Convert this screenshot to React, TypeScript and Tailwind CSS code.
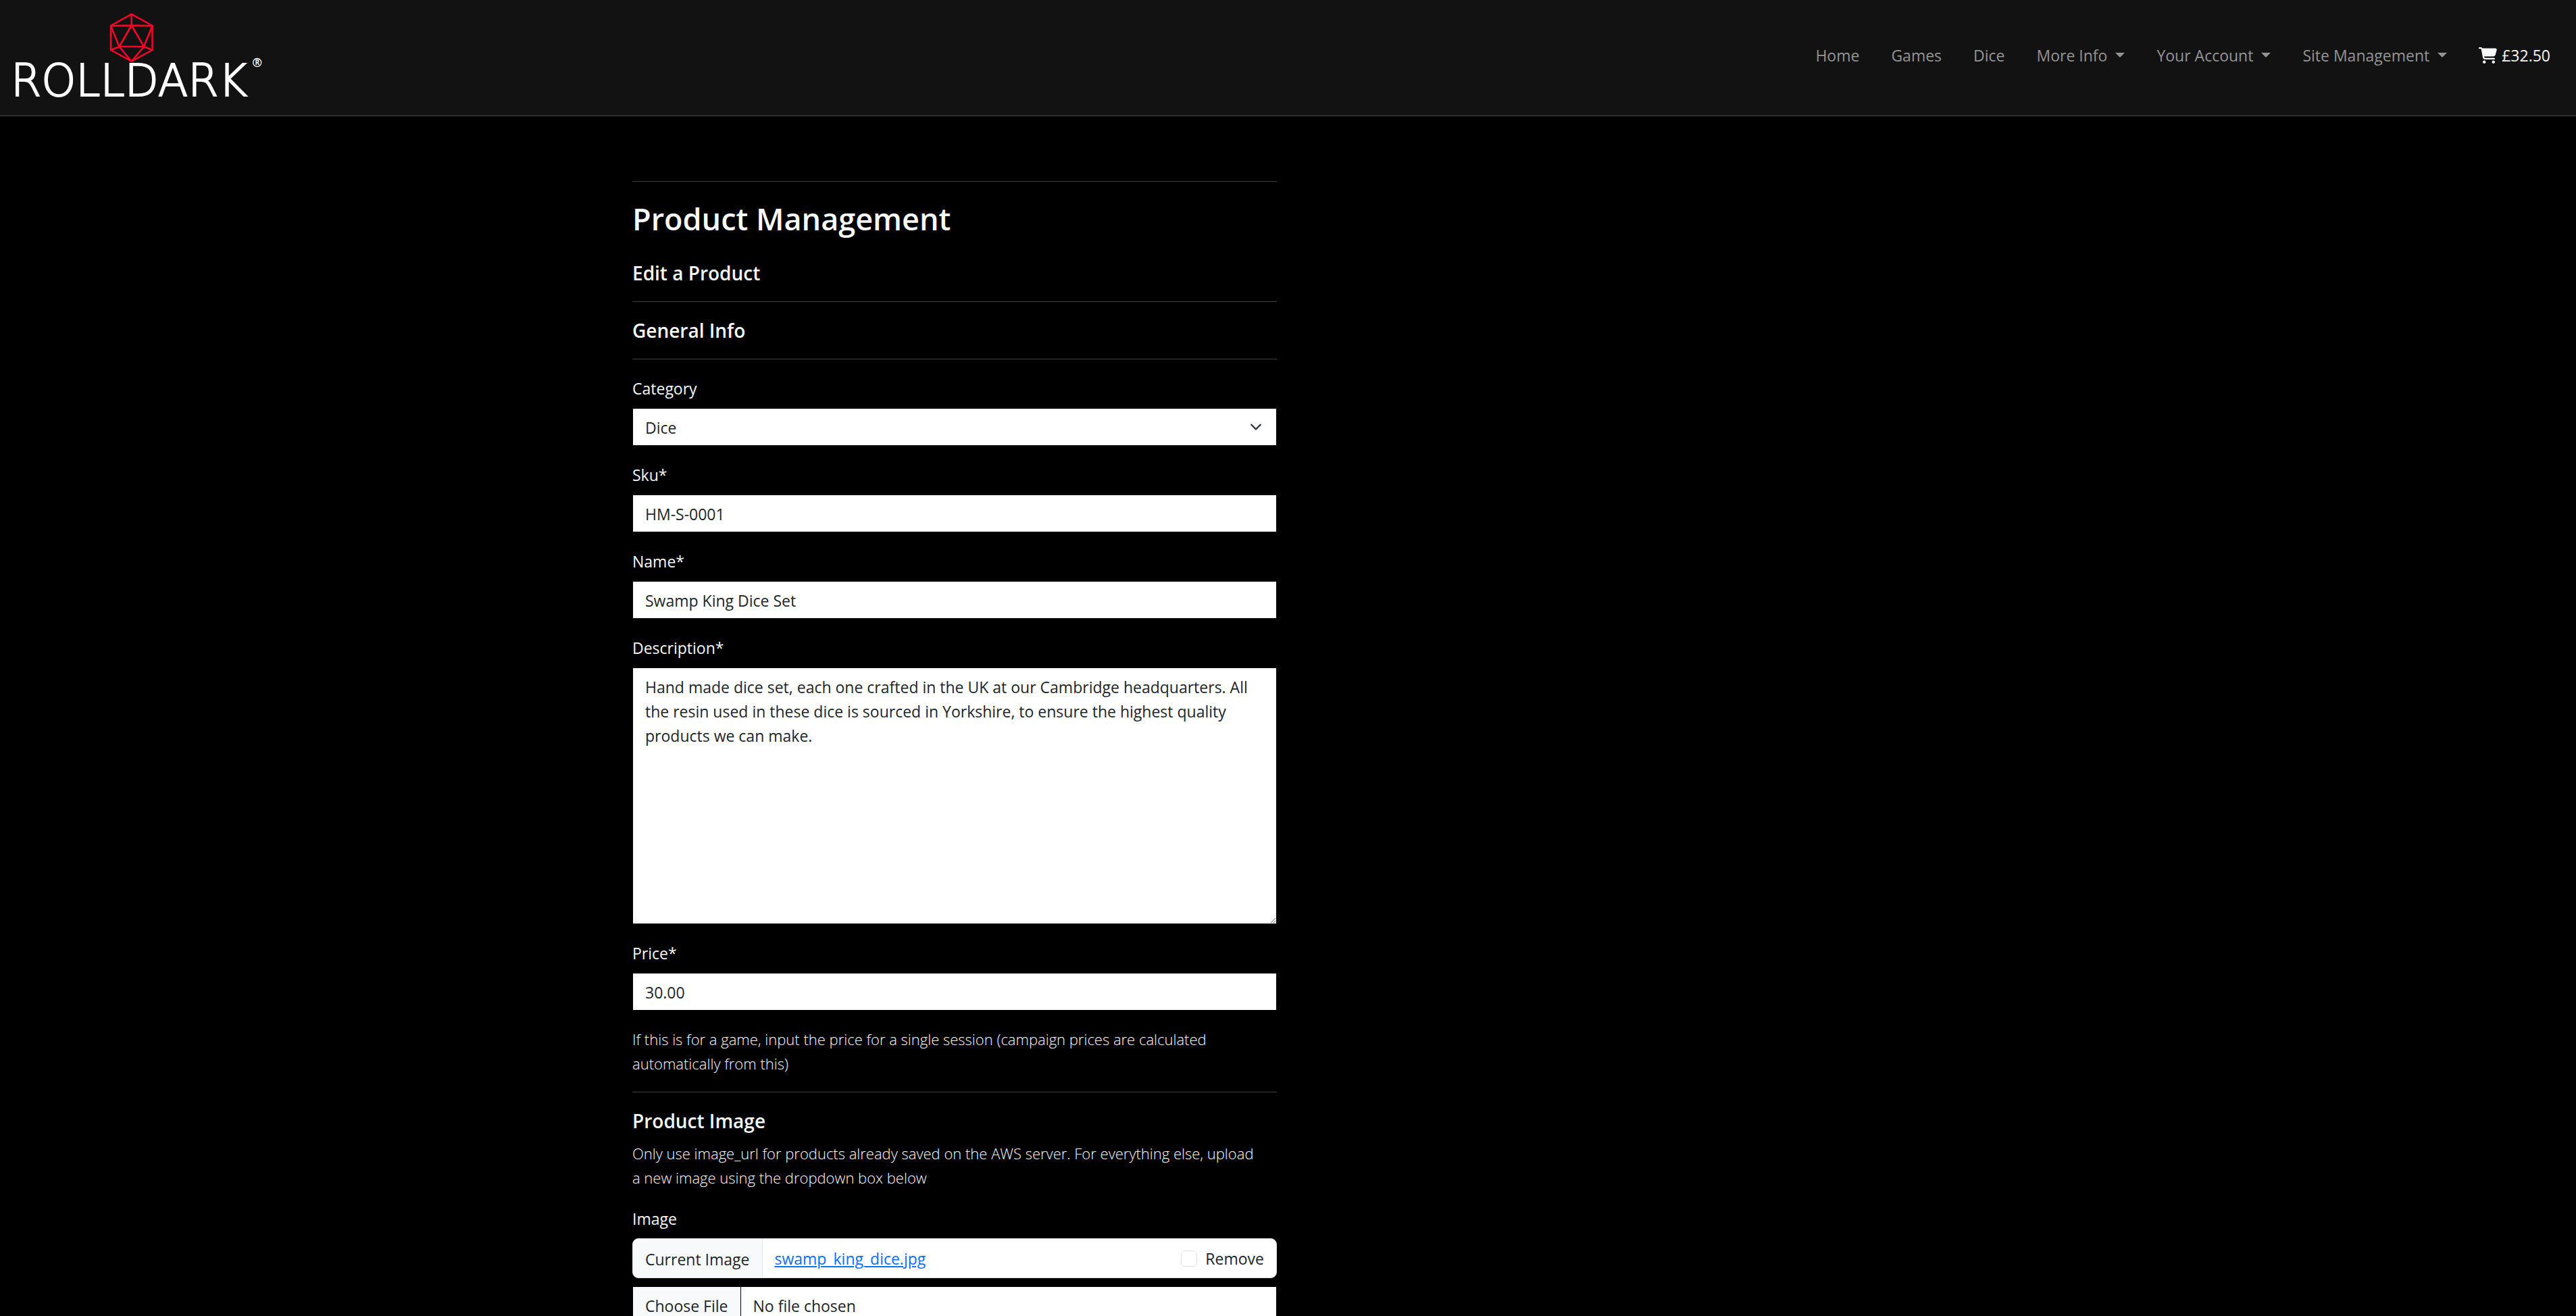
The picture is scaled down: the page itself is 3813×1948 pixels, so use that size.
import type { ReactNode } from "react";
import { FaCartShopping } from "react-icons/fa6";

const fieldClass =
  "block w-full border border-black bg-white px-[18px] pt-[10px] pb-2 text-[23px] leading-9 text-[#212529]";

function Logo() {
  return (
    <svg
      className="h-[148px] w-[392px]"
      viewBox="10 12 392 148"
      role="img"
      aria-label="Rolldark home"
    >
      <g stroke="#ff0029" strokeWidth="2.5" strokeLinejoin="round" fill="none">
        <path d="M194.7 20.8 225.5 38V74L194.7 90.7 164 74V38Z" />
        <path d="M194.7 37.5 213 69H176.5Z" />
        <path d="M194.7 20.8V37.5M164 38.3 194.7 37.5 225.5 38.3M164 38 176.5 69M225.5 38 213 69M164 74 176.5 69 194.7 90.7 213 69 225.5 74" />
      </g>
      <text
        x="16"
        y="142"
        fill="#fff"
        stroke="#fff"
        strokeWidth="2"
        className="font-['DejaVu_Sans',sans-serif] text-[65px] font-extralight"
      >
        ROLLDARK
      </text>
      <circle cx="380.7" cy="92.5" r="6" fill="none" stroke="#fff" strokeWidth="1.4" />
      <text
        x="380.7"
        y="96"
        textAnchor="middle"
        fill="#fff"
        className="font-['Open_Sans',sans-serif] text-[10px] font-bold"
      >
        R
      </text>
    </svg>
  );
}

function Caret() {
  return (
    <span
      aria-hidden="true"
      className="ml-3 inline-block border-x-[7px] border-t-[7px] border-x-transparent border-t-current align-[6px]"
    />
  );
}

function NavLink({ children, menu = false }: { children: ReactNode; menu?: boolean }) {
  return (
    <li>
      {menu ? (
        <button type="button" aria-haspopup="menu" className="whitespace-nowrap">
          {children}
          <Caret />
        </button>
      ) : (
        <a href="#" className="whitespace-nowrap">
          {children}
        </a>
      )}
    </li>
  );
}

function Field({ id, label, children }: { id: string; label: string; children: ReactNode }) {
  return (
    <div className="mb-6">
      <label htmlFor={id} className="mb-[11px] block pt-px leading-9 font-medium">
        {label}
      </label>
      {children}
    </div>
  );
}

function Rule() {
  return <hr className="my-6 border-0 border-t border-[#404041]" />;
}

export default function App() {
  return (
    <div className="min-h-screen bg-black font-['Open_Sans',sans-serif] text-[23px] leading-9 text-[#f8f9fa]">
      <header className="flex items-center justify-between border-b border-[#495057] bg-[#121212] pt-3 pr-[38px] pb-[11px] pl-[10px]">
        <a href="#">
          <Logo />
        </a>
        <nav aria-label="Main" className="pb-2">
          <ul className="flex items-center gap-[47px] text-[#949494]">
            <NavLink>Home</NavLink>
            <NavLink>Games</NavLink>
            <NavLink>Dice</NavLink>
            <NavLink menu>More Info</NavLink>
            <NavLink menu>Your Account</NavLink>
            <NavLink menu>Site Management</NavLink>
            <li>
              <a href="#" className="flex items-center gap-[7px] font-medium text-[#f8f9fa]">
                <FaCartShopping className="h-6 w-[27px]" aria-hidden="true" />
                £32.50
              </a>
            </li>
          </ul>
        </nav>
      </header>

      <main className="pt-18 pl-[3px]">
        <div className="mx-auto grid max-w-[1980px] grid-cols-2">
          <div className="px-[18px]">
            <Rule />
            <h1 className="mb-8 text-[45px] leading-[61px] font-semibold">Product Management</h1>
            <h2 className="text-[28px] leading-9 font-semibold">Edit a Product</h2>
            <Rule />
            <form>
              <h3 className="text-[28px] leading-9 font-semibold">General Info</h3>
              <Rule />
              <Field id="category" label="Category">
                <div className="relative">
                  <select id="category" className={fieldClass + " appearance-none"} defaultValue="dice">
                    <option value="dice">Dice</option>
                    <option value="games">Games</option>
                  </select>
                  <svg
                    className="pointer-events-none absolute inset-y-0 right-[22px] my-auto size-[18px]"
                    viewBox="0 0 16 16"
                    aria-hidden="true"
                  >
                    <path
                      d="m2 5 6 6 6-6"
                      fill="none"
                      stroke="#343a40"
                      strokeWidth="2"
                      strokeLinecap="round"
                      strokeLinejoin="round"
                    />
                  </svg>
                </div>
              </Field>
              <Field id="sku" label="Sku*">
                <input id="sku" type="text" className={fieldClass} defaultValue="HM-S-0001" />
              </Field>
              <Field id="name" label="Name*">
                <input id="name" type="text" className={fieldClass} defaultValue="Swamp King Dice Set" />
              </Field>
              <Field id="description" label="Description*">
                <textarea
                  id="description"
                  rows={10}
                  className={fieldClass + " resize-y"}
                  defaultValue="Hand made dice set, each one crafted in the UK at our Cambridge headquarters. All the resin used in these dice is sourced in Yorkshire, to ensure the highest quality products we can make."
                />
              </Field>
              <Field id="price" label="Price*">
                <input id="price" type="text" className={fieldClass} defaultValue="30.00" />
              </Field>
              <p className="text-[22px] leading-9 font-light">
                If this is for a game, input the price for a single session (campaign prices are
                calculated automatically from this)
              </p>
              <Rule />
              <h3 className="mb-3 text-[28px] leading-9 font-semibold">Product Image</h3>
              <p className="mb-6 text-[22px] leading-9 font-light">
                Only use image_url for products already saved on the AWS server. For everything
                else, upload a&nbsp;new image using the dropdown box below
              </p>
              <Field id="image" label="Image">
                <div className="mb-3 flex overflow-hidden rounded-[9px] border border-[#dee2e6] bg-white text-[#212529]">
                  <span className="flex items-center border-r border-[#dee2e6] bg-[#f8f9fa] px-[18px] pt-3 pb-[9px]">
                    Current Image
                  </span>
                  <div className="flex grow items-center justify-between px-[18px]">
                    <a href="#" className="text-[#0d6efd] underline">
                      swamp_king_dice.jpg
                    </a>
                    <div className="flex items-center gap-3">
                      <input
                        id="remove"
                        type="checkbox"
                        className="size-6 appearance-none rounded-md border border-[#dee2e6] bg-white"
                      />
                      <label htmlFor="remove">Remove</label>
                    </div>
                  </div>
                </div>
                <input
                  id="image"
                  type="file"
                  className="block w-full border border-black bg-white pr-[18px] text-[23px] leading-9 text-[#212529] file:mr-[18px] file:border-r file:border-black file:bg-[#f8f9fa] file:px-[18px] file:pt-[10px] file:pb-2 file:text-[#212529]"
                />
              </Field>
            </form>
          </div>
        </div>
      </main>
    </div>
  );
}
